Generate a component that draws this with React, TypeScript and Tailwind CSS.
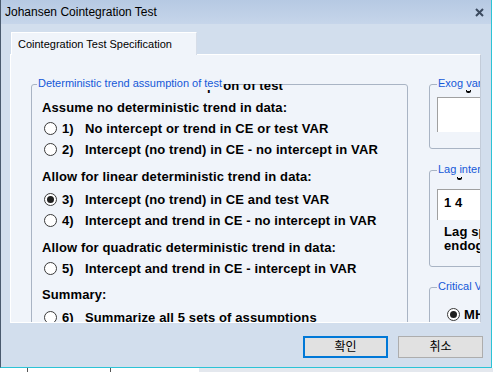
import React from 'react';

const Radio = ({ checked = false }: { checked?: boolean }) => (
  <span className="flex h-[13px] w-[13px] shrink-0 items-center justify-center rounded-full border border-[#3a3a3a] bg-white">
    {checked && <span className="h-[7px] w-[7px] rounded-full bg-[#1f1f1f]" />}
  </span>
);

const Heading = ({ text, className = '' }: { text: string; className?: string }) => (
  <div className={`flex h-[21px] items-center pl-[10px] whitespace-nowrap ${className}`}>{text}</div>
);

const Option = ({
  num,
  text,
  checked = false,
  className = '',
}: {
  num: string;
  text: string;
  checked?: boolean;
  className?: string;
}) => (
  <div className={`flex h-[21px] items-center pl-[12px] whitespace-nowrap ${className}`}>
    <Radio checked={checked} />
    <span className="ml-[5px] w-[23px]">{num}</span>
    <span>{text}</span>
  </div>
);

const GroupBox = ({
  label,
  labelLeft,
  className = '',
  children,
}: {
  label: string;
  labelLeft: string;
  className?: string;
  children?: React.ReactNode;
}) => (
  <div className={`relative shrink-0 rounded-[3px] border border-[#a9b4c4] ${className}`}>
    <span
      className={`absolute top-[-8px] z-10 whitespace-nowrap bg-[#f0f4fa] px-[1px] text-[11px] font-normal leading-[13px] tracking-normal text-[#1558d8] ${labelLeft}`}
    >
      {label}
    </span>
    {children}
  </div>
);

// little glyph bottoms that stick out from under clipped text
const Tick = ({ className }: { className: string }) => (
  <span className={`absolute h-[3px] w-[5px] rounded-b-[2px] border-x border-b-2 border-black ${className}`} />
);

export default function App() {
  return (
    <div className="relative h-[372px] w-[493px] overflow-hidden bg-white font-['Liberation_Sans',Arial,sans-serif] text-black">
      <div className="flex h-[368px] w-[492px] flex-col border-b border-l border-r border-b-[#2cc3d6] border-l-[#4a5a6e] border-r-[#2cc3d6] bg-[#d2deed]">
        {/* title bar */}
        <div className="flex h-[24px] shrink-0 items-center justify-between bg-gradient-to-b from-[#b6c9e3] to-[#c6d5ea] pl-[4px] pr-[7px]">
          <span className="text-[12px] leading-[14px]">Johansen Cointegration Test</span>
          <svg width="9" height="9" viewBox="0 0 9 9">
            <path d="M1 1L8 8M8 1L1 8" stroke="#3b4a5f" strokeWidth="2" />
          </svg>
        </div>

        {/* tab */}
        <div className="relative z-10 -mb-px ml-[10px] mt-[8px] flex h-[23px] w-[186px] items-center border-l border-r border-t border-l-white border-r-[#d6dde8] border-t-white bg-[#f0f4fa] pl-[6px] text-[11px]">
          Cointegration Test Specification
        </div>

        {/* panel */}
        <div className="ml-[9px] flex h-[269px] w-[471px] items-start gap-[21px] overflow-hidden border border-b-white border-l-white border-r-[#c3ccd9] border-t-white bg-[#f0f4fa] pl-[20px] pt-[29px] text-[13px] font-bold tracking-[0.12px]">
          <GroupBox label="Deterministic trend assumption of test" labelLeft="left-[5px]" className="h-[260px] w-[377px] pt-[12px]">
            <div className="absolute left-[175px] top-[-1px] h-[9px] overflow-hidden">
              <div className="-mt-[5px] whitespace-nowrap text-[13px] font-bold leading-[13px]">ption of test</div>
            </div>
            <Heading text="Assume no deterministic trend in data:" />
            <Option num="1)" text="No intercept or trend in CE or test VAR" />
            <Option num="2)" text="Intercept (no trend) in CE - no intercept in VAR" />
            <Heading text="Allow for linear deterministic trend in data:" className="mt-[6px]" />
            <Option num="3)" text="Intercept (no trend) in CE and test VAR" checked className="mt-[2px]" />
            <Option num="4)" text="Intercept and trend in CE - no intercept in VAR" />
            <Heading text="Allow for quadratic deterministic trend in data:" className="mt-[6px]" />
            <Option num="5)" text="Intercept and trend in CE - intercept in VAR" />
            <Heading text="Summary:" className="mt-[5px]" />
            <Option num="6)" text="Summarize all 5 sets of assumptions" className="mt-[2px]" />
          </GroupBox>

          <div className="flex w-[90px] shrink-0 flex-col">
            <GroupBox label="Exog variables" labelLeft="left-[7px]" className="h-[65px] pl-[7px] pt-[12px]">
              <Tick className="left-[36px] top-[5px]" />
              <div className="h-[35px] border-l border-t border-[#a0a0a0] bg-white" />
            </GroupBox>

            <GroupBox label="Lag intervals" labelLeft="left-[7px]" className="mt-[21px] h-[97px] pt-[18px]">
              <Tick className="left-[27px] top-[6px]" />
              <div className="ml-[7px] flex h-[31px] items-center border-l border-t border-[#a0a0a0] bg-white pb-[4px] pl-[6px]">
                1 4
              </div>
              <div className="ml-[14px] mt-[5px] whitespace-nowrap leading-[14px]">
                <div>Lag specification</div>
                <div>endogenous</div>
              </div>
            </GroupBox>

            <GroupBox label="Critical Values" labelLeft="left-[7px]" className="mt-[20px] h-[60px] pt-[20px]">
              <div className="ml-[17px] flex items-center whitespace-nowrap">
                <Radio checked />
                <span className="ml-[4px] leading-[13px]">MHM</span>
              </div>
            </GroupBox>
          </div>
        </div>

        {/* buttons */}
        <div className="mt-[13px] flex justify-end gap-[10px] pr-[8px] font-['Liberation_Sans','Noto_Sans_CJK_KR',sans-serif] text-[12px]">
          <button className="flex h-[22px] w-[85px] items-center justify-center border-2 border-[#0078d7] bg-[#e1e1e1]">
            확인
          </button>
          <button className="flex h-[22px] w-[85px] items-center justify-center border border-[#adadad] bg-[#e1e1e1]">
            취소
          </button>
        </div>
      </div>

      {/* strip of desktop behind the window */}
      <div className="flex h-[4px]">
        <div className="w-[28px] border-r border-[#555]" />
        <div className="w-[83px] border-r border-[#555]" />
        <div className="w-[88px]" />
        <div className="flex-1 bg-[#e4e8ee]" />
      </div>
    </div>
  );
}
